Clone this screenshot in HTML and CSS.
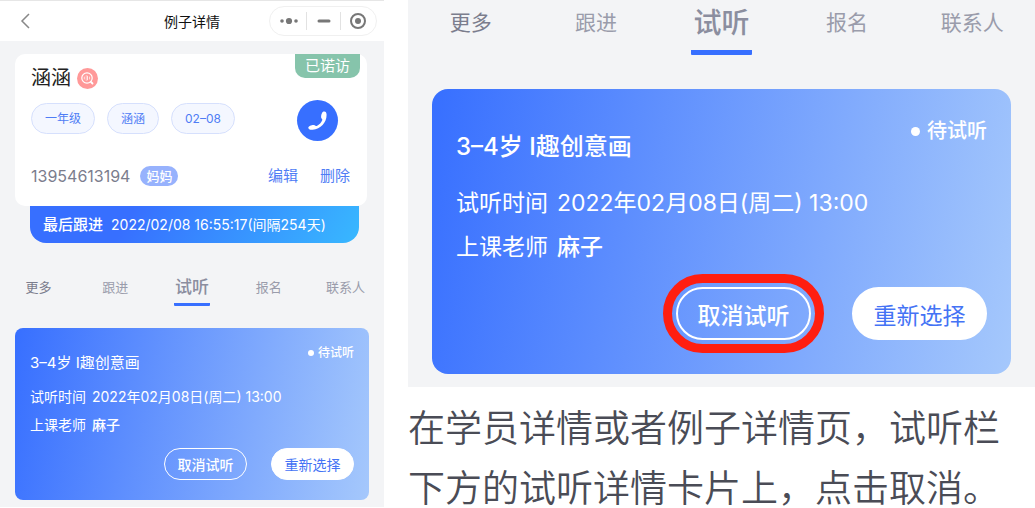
FILE: index.html
```html
<!DOCTYPE html>
<html lang="zh-CN">
<head>
  <meta charset="UTF-8">
  <meta name="viewport" content="width=device-width, initial-scale=1">
  <title>例子详情</title>
  <link rel="stylesheet" href="styles.css">
</head>
<body>
  <div class="page">
    <section class="phone">
      <header class="navbar">
        <button class="back" type="button" aria-label="返回">
          <svg width="10" height="16" viewBox="0 0 10 16"><path d="M9 1 2 8l7 7" fill="none" stroke="#888" stroke-width="1.5"/></svg>
        </button>
        <h1>例子详情</h1>
        <div class="capsule">
          <button type="button" aria-label="菜单">
            <svg width="18" height="8" viewBox="0 0 18 8" fill="#777"><circle cx="2" cy="4" r="1.8"/><circle cx="9" cy="4" r="3.1"/><circle cx="16" cy="4" r="1.8"/></svg>
          </button>
          <button type="button" aria-label="最小化">
            <svg width="14" height="4" viewBox="0 0 14 4"><path d="M2 2h10" stroke="#777" stroke-width="3" stroke-linecap="round"/></svg>
          </button>
          <button type="button" aria-label="关闭">
            <svg width="18" height="18" viewBox="0 0 18 18"><circle cx="9" cy="9" r="7" fill="none" stroke="#777" stroke-width="2"/><circle cx="9" cy="9" r="3" fill="#777"/></svg>
          </button>
        </div>
      </header>

      <div class="profile">
        <span class="badge">已诺访</span>
        <div class="name-row">
          <h2>涵涵</h2>
          <svg width="21" height="21" viewBox="0 0 21 21">
            <circle cx="10.5" cy="10.5" r="10.5" fill="#ff9999"/>
            <g fill="none" stroke="#fff" stroke-linecap="round">
              <circle cx="10" cy="10" r="5.2" stroke-width="1.2"/>
              <path d="m14 14 1.5 1.5" stroke-width="1.8"/>
              <path d="M7.3 9v2M9 8h1.5v4H9M9 10h1.5M12.6 9v2" stroke-width=".7"/>
            </g>
          </svg>
        </div>
        <div class="tag-row">
          <span class="tag">一年级</span>
          <span class="tag">涵涵</span>
          <span class="tag">02–08</span>
          <button class="call" type="button" aria-label="拨打电话">
            <svg width="41" height="41" viewBox="0 0 41 41"><path d="M26.4 11.6c1.800-.7 3.200.4 3.200 3.200 0 8-6 14.400-14 15-2.700.2-4.300-.6-4.300-2 0-1.800 4.800-3.300 6.300-2.500.8.5 1.200 1.100 2.200.6 2.600-1.200 4.600-3.400 5.500-5.900.3-.9-.7-1.300-1-2.100-.5-1.500.4-5.600 2.100-6.300z" fill="#fff"/></svg>
          </button>
        </div>
        <div class="contact-row">
          <span class="number">13954613194</span>
          <span class="relation">妈妈</span>
          <a href="#edit">编辑</a>
          <a href="#delete">删除</a>
        </div>
      </div>
      <div class="last-follow"><strong>最后跟进</strong><span>2022/02/08 16:55:17(间隔254天)</span></div>

      <nav class="tabs">
        <a class="dark" href="#more">更多</a>
        <a href="#follow">跟进</a>
        <a class="active" href="#trial">试听</a>
        <a href="#signup">报名</a>
        <a href="#contact">联系人</a>
      </nav>

      <article class="trial">
        <div class="trial-head">
          <h3>3–4岁 I趣创意画</h3>
          <span class="status">待试听</span>
        </div>
        <p><span>试听时间</span><span>2022年02月08日(周二) 13:00</span></p>
        <p><span>上课老师</span><strong>麻子</strong></p>
        <div class="actions">
          <button class="cancel" type="button">取消试听</button>
          <button class="again" type="button">重新选择</button>
        </div>
      </article>
    </section>

    <section class="guide">
      <div class="closeup">
        <nav class="tabs">
          <a class="dark" href="#more">更多</a>
          <a href="#follow">跟进</a>
          <a class="active" href="#trial">试听</a>
          <a href="#signup">报名</a>
          <a href="#contact">联系人</a>
        </nav>
        <article class="trial">
          <div class="trial-head">
            <h3>3–4岁 I趣创意画</h3>
            <span class="status">待试听</span>
          </div>
          <p><span>试听时间</span><span>2022年02月08日(周二) 13:00</span></p>
          <p><span>上课老师</span><strong>麻子</strong></p>
          <div class="actions">
            <button class="cancel marked" type="button">取消试听</button>
            <button class="again" type="button">重新选择</button>
          </div>
        </article>
      </div>
      <p class="caption">
        <span>在学员详情或者例子详情页，试听栏</span>
        <span>下方的试听详情卡片上，点击取消。</span>
      </p>
    </section>
  </div>
</body>
</html>
```

FILE: styles.css
```css
* {
  box-sizing: border-box;
}
body {
  margin: 0;
  background: #fff;
  font-family: Inter, "Noto Sans CJK SC", sans-serif;
  font-size: 14px;
}
h1, h2, h3, p {
  margin: 0;
  font-weight: 400;
}
strong {
  font-weight: 500;
}
a {
  text-decoration: none;
}
button {
  padding: 0;
  border: none;
  background: none;
  font-family: inherit;
}
svg {
  display: block;
}
.page {
  display: grid;
  grid-template-columns: 384fr 627fr;
  gap: 24px;
  align-items: start;
}
.phone {
  background: #f3f4f6;
  padding-bottom: 7px;
}

/* top bar */
.navbar {
  display: grid;
  grid-template-columns: 1fr auto 1fr;
  align-items: center;
  height: 41px;
  padding: 0 7px 0 20px;
  background: #fff;
  border-top: 1px solid #e6e6e6;
}
.navbar h1 {
  font-size: 14px;
  padding-right: 13px;
  color: #111;
}
.back {
  justify-self: start;
}
.capsule {
  justify-self: end;
  display: grid;
  grid-template-columns: repeat(3, 1fr);
  align-items: center;
  width: 108px;
  height: 30px;
  padding: 0 2px;
  border: 1px solid #f0f0f0;
  border-radius: 15px;
}
.capsule button {
  display: flex;
  align-items: center;
  justify-content: center;
  height: 18px;
}
.capsule button + button {
  border-left: 1px solid #e2e2e2;
}

/* student card */
.profile {
  position: relative;
  margin: 13px 17px 0 15px;
  padding: 12px 17px 19px 16px;
  background: #fff;
  border-radius: 10px;
}
.badge {
  position: absolute;
  top: 0;
  right: 7px;
  padding: 0 10px;
  line-height: 24px;
  font-size: 15px;
  color: #fff;
  background: #86c4ab;
  border-radius: 0 0 10px 10px;
}
.name-row {
  display: flex;
  align-items: center;
  gap: 6px;
  height: 24px;
}
.name-row h2 {
  font-size: 20px;
  line-height: 24px;
  color: #222;
}
.tag-row {
  display: flex;
  align-items: flex-start;
  gap: 12px;
  margin-top: 13px;
}
.tag {
  padding: 0 13px;
  line-height: 29px;
  font-size: 12px;
  color: #4f7df5;
  background: #f4f7ff;
  border: 1px solid #d6e0fd;
  border-radius: 16px;
}
.call {
  margin: -3px 12px 0 auto;
  border-radius: 50%;
  background: #376fff;
}
.contact-row {
  display: flex;
  align-items: center;
  gap: 10px;
  margin-top: 24px;
  line-height: 22px;
}
.number {
  font-size: 16px;
  color: #7b7d8d;
}
.relation {
  padding: 0 6px;
  line-height: 20px;
  font-size: 13px;
  font-weight: 500;
  color: #fff;
  background: #97b2fd;
  border-radius: 10px;
}
.contact-row a {
  font-size: 15px;
  color: #4f7df5;
}
.relation + a {
  margin: 0 12px 0 auto;
}
.last-follow {
  display: flex;
  gap: 8px;
  margin: 0 25px 0 30px;
  padding-left: 13px;
  line-height: 37px;
  color: #fff;
  background: linear-gradient(120deg, #376fff 30%, #38b8ff);
  border-radius: 0 0 16px 16px;
}
.last-follow strong {
  font-size: 15px;
}

/* tabs */
.tabs {
  display: grid;
  grid-template-columns: repeat(5, 1fr);
  justify-items: center;
  align-items: center;
  height: 85px;
  padding-top: 2px;
}
.tabs a {
  font-size: 13px;
  color: #9a9cab;
}
.tabs .dark {
  color: #7b7d8d;
}
.tabs .active {
  padding: 7px 1px 4px;
  font-size: 17px;
  font-weight: 500;
  line-height: 24px;
  color: #8b8e9f;
  border-bottom: 3px solid #376fff;
  border-radius: 1px;
}

/* trial lesson card */
.trial {
  margin: 0 15px;
  padding: 15px 15px 20px;
  color: #fff;
  background: linear-gradient(100deg, #376fff, #a5c8fc);
  border-radius: 8px;
}
.trial-head {
  display: flex;
  justify-content: space-between;
  align-items: flex-start;
}
.trial h3 {
  padding-top: 8px;
  font-size: 15px;
  line-height: 24px;
}
.status {
  display: flex;
  align-items: center;
  gap: 4px;
  font-size: 12px;
  font-weight: 500;
  line-height: 20px;
}
.status::before {
  content: "";
  width: 6px;
  height: 6px;
  border-radius: 50%;
  background: #fff;
}
.trial p {
  display: flex;
  gap: 6px;
  line-height: 28px;
}
.trial-head + p {
  margin-top: 8px;
}
.actions {
  display: flex;
  justify-content: flex-end;
  gap: 24px;
  margin-top: 9px;
}
.actions button {
  width: 83px;
  height: 32px;
  font-size: 14px;
  border: 1px solid #fff;
  border-radius: 27px;
}
.actions .cancel {
  color: #fff;
  font-weight: 500;
}
.actions .again {
  color: #4473f5;
  background: #fff;
}

/* enlarged part on the right */
.closeup {
  background: #f3f4f6;
  padding-bottom: 13px;
}
.closeup .tabs {
  align-items: start;
  height: 89px;
  padding-top: 0;
}
.closeup .tabs a {
  font-size: 21px;
  line-height: 46px;
}
.closeup .tabs .active {
  padding: 0 2px 4px;
  font-size: 28px;
  border-bottom-width: 5px;
}
.closeup .trial {
  margin: 0 24px;
  padding: 26px 24px 34px;
  border-radius: 16px;
}
.closeup .trial h3 {
  padding-top: 12px;
  font-size: 24px;
  font-weight: 500;
  line-height: 40px;
}
.closeup .status {
  gap: 7px;
  font-size: 20px;
  line-height: 32px;
}
.closeup .status::before {
  width: 9px;
  height: 9px;
}
.closeup .trial p {
  gap: 9px;
  font-size: 23px;
  line-height: 44px;
}
.closeup .trial-head + p {
  margin-top: 14px;
}
.closeup .actions {
  gap: 41px;
  margin-top: 18px;
}
.closeup .actions button {
  width: 135px;
  height: 53px;
  font-size: 23px;
  border-width: 2px;
}
.closeup .marked {
  outline: 9px solid #ff1e10;
  outline-offset: 4px;
}
.caption {
  display: flex;
  flex-direction: column;
  gap: 22px;
  margin-top: 23px;
  font-size: 37px;
  font-weight: 350;
  line-height: 38px;
  white-space: nowrap;
  color: #4a4c56;
}
```
